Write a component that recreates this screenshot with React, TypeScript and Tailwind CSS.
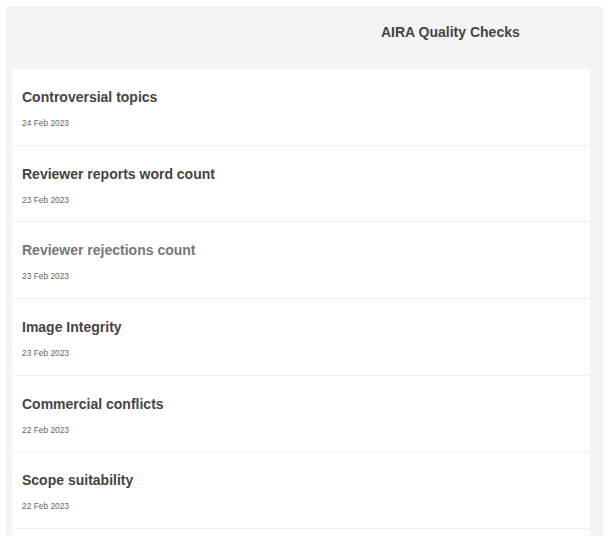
import React from 'react';

type Check = {
  title: string;
  date: string;
  muted?: boolean;
};

const checks: Check[] = [
  { title: 'Controversial topics', date: '24 Feb 2023' },
  { title: 'Reviewer reports word count', date: '23 Feb 2023' },
  { title: 'Reviewer rejections count', date: '23 Feb 2023', muted: true },
  { title: 'Image Integrity', date: '23 Feb 2023' },
  { title: 'Commercial conflicts', date: '22 Feb 2023' },
  { title: 'Scope suitability', date: '22 Feb 2023' },
];

export default function App() {
  return (
    <div className="min-h-[554px] w-[609px] bg-white p-[6px] font-['Liberation_Sans',Arial,sans-serif]">
      <div className="flex h-[530px] w-[597px] flex-col overflow-hidden bg-[#f4f4f4]">
        <div className="h-[63px] shrink-0 pt-[17px] pl-[375px]">
          <h1 className="text-[14px] leading-[18px] font-bold text-[#444]">AIRA Quality Checks</h1>
        </div>
        <ul className="ml-[6px] w-[578px] flex-1 bg-white">
          {checks.map((check) => (
            <li
              key={check.title}
              className="box-border flex h-[76.67px] flex-col border-b border-[#f0f0f0] px-[10px] pt-[19px]"
            >
              <span
                className={`text-[14px] leading-[18px] font-bold ${check.muted ? 'text-[#777]' : 'text-[#444]'}`}
              >
                {check.title}
              </span>
              <span className="mt-[12px] text-[8.4px] leading-[10px] text-[#6b6560]">{check.date}</span>
            </li>
          ))}
        </ul>
      </div>
    </div>
  );
}
